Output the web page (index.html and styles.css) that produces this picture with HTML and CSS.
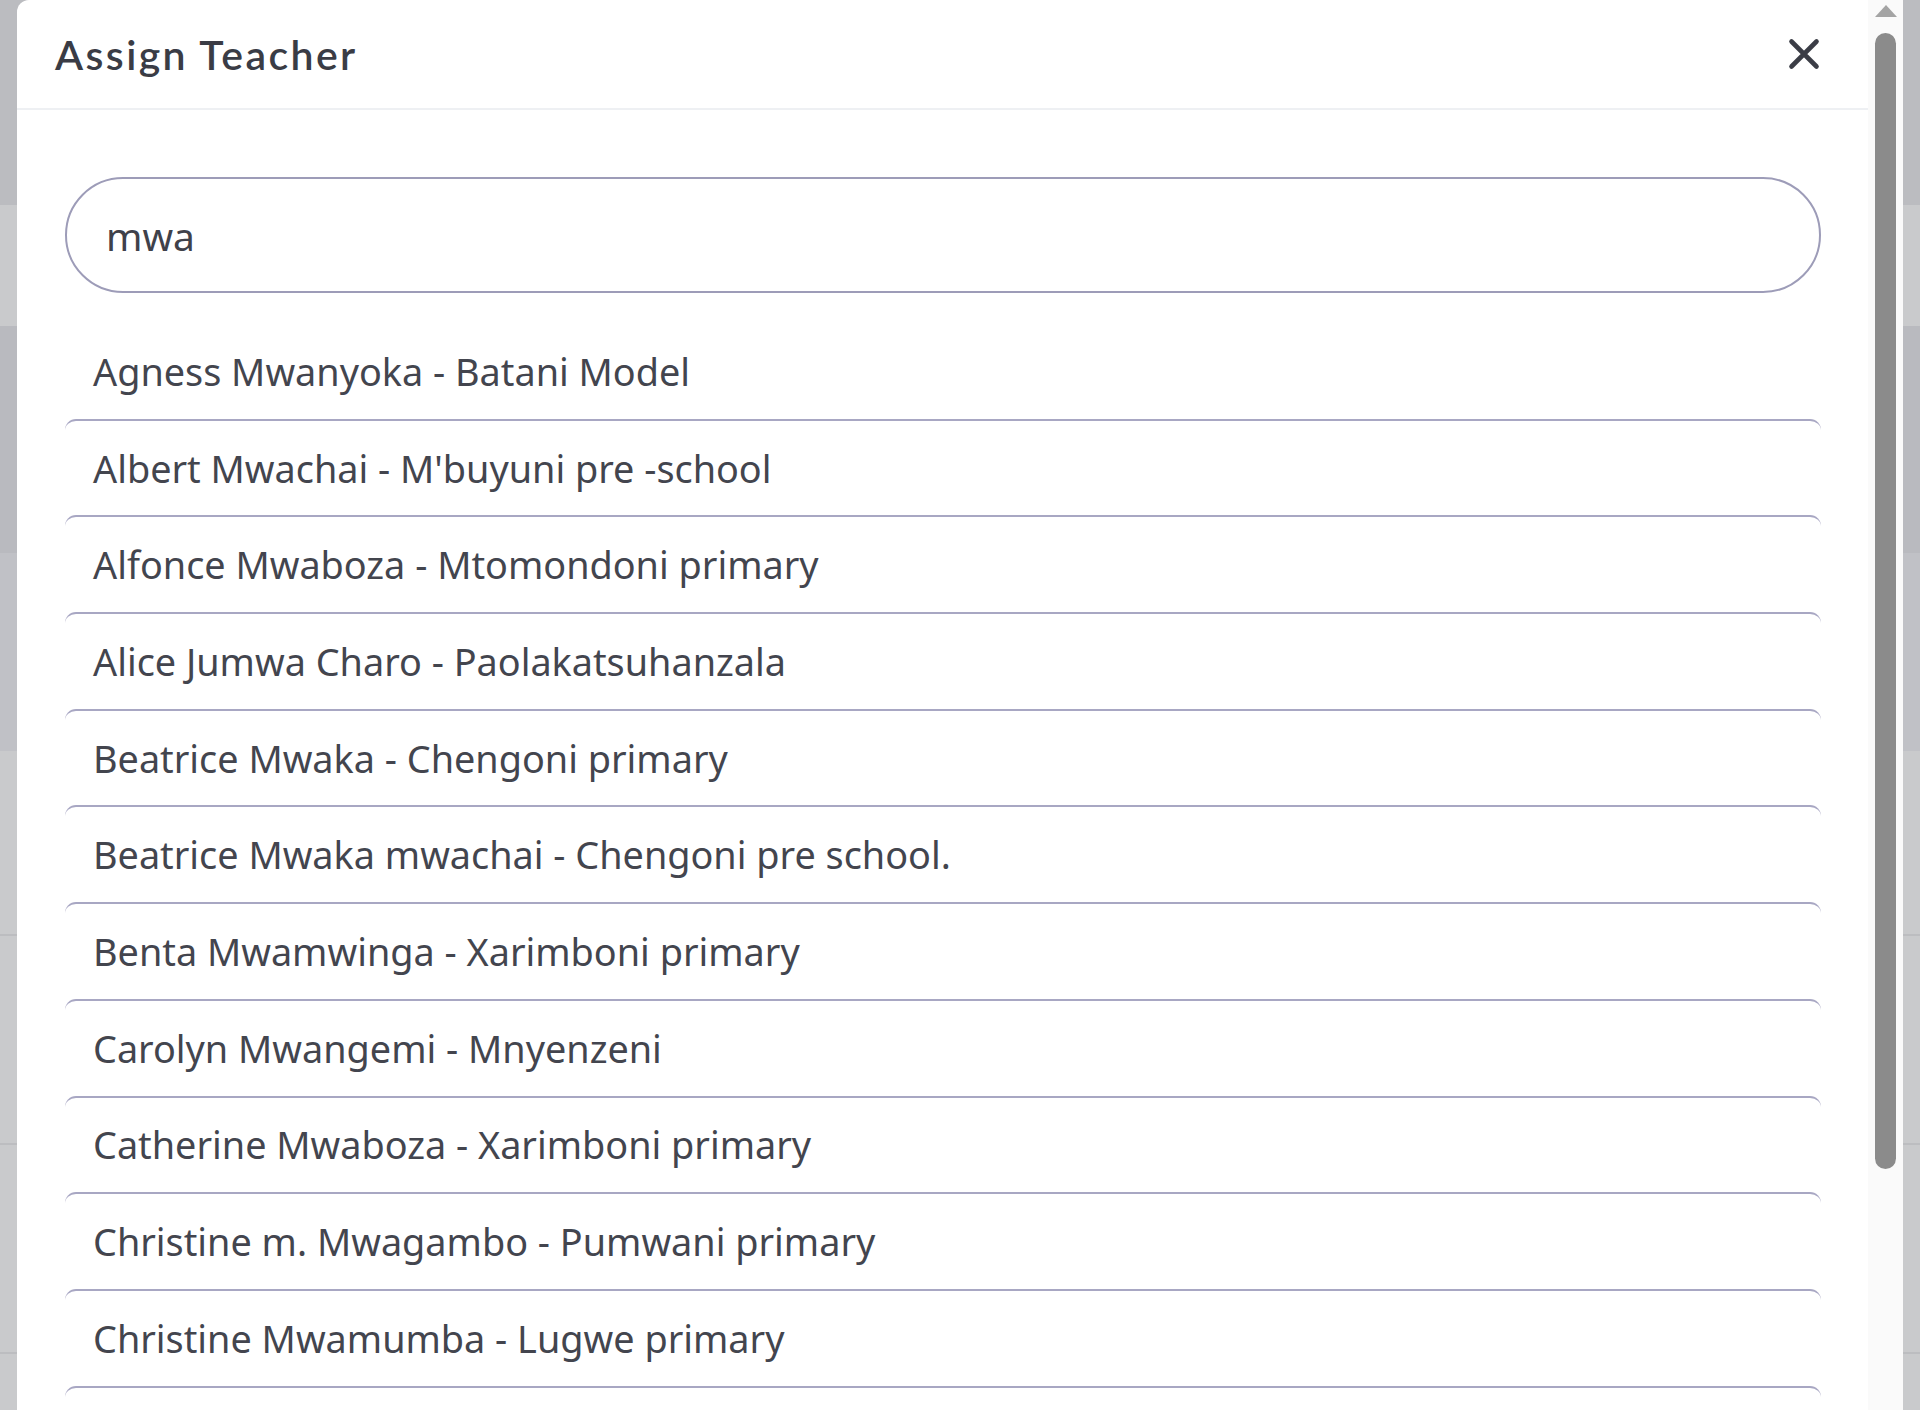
FILE: index.html
```html
<!DOCTYPE html>
<html lang="en">
<head>
<meta charset="utf-8">
<title>Assign Teacher</title>
<link rel="stylesheet" href="styles.css">
</head>
<body>
  <div class="modal">
    <div class="modal-scroll">
      <header class="modal-header">
        <h1 class="modal-title">Assign Teacher</h1>
        <button class="close-btn" aria-label="Close">
          <svg width="32" height="32" viewBox="0 0 32 32"><path d="M3.5 3.5 L28.5 28.5 M28.5 3.5 L3.5 28.5" stroke="#3b3d46" stroke-width="4.6" stroke-linecap="round" fill="none"/></svg>
        </button>
      </header>
      <div class="modal-body">
        <input class="search" type="text" value="mwa">
        <ul class="results">
          <li class="result">Agness Mwanyoka - Batani Model</li>
          <li class="result">Albert Mwachai - M'buyuni pre -school</li>
          <li class="result">Alfonce Mwaboza - Mtomondoni primary</li>
          <li class="result">Alice Jumwa Charo - Paolakatsuhanzala</li>
          <li class="result">Beatrice Mwaka - Chengoni primary</li>
          <li class="result">Beatrice Mwaka mwachai - Chengoni pre school.</li>
          <li class="result">Benta Mwamwinga - Xarimboni primary</li>
          <li class="result">Carolyn Mwangemi - Mnyenzeni</li>
          <li class="result">Catherine Mwaboza - Xarimboni primary</li>
          <li class="result">Christine m. Mwagambo - Pumwani primary</li>
          <li class="result">Christine Mwamumba - Lugwe primary</li>
          <li class="result result-empty"></li>
        </ul>
      </div>
    </div>
    <div class="scrollbar" aria-hidden="true">
      <span class="scroll-arrow"></span>
      <span class="scroll-thumb"></span>
    </div>
  </div>
</body>
</html>
```

FILE: styles.css
```css
html, body {
  margin: 0;
  padding: 0;
  height: 100%;
}

body {
  display: flex;
  padding: 0 17px;
  box-sizing: border-box;
  overflow: hidden;
  background: linear-gradient(to bottom,
    #bbbcc0 0, #bbbcc0 205px,
    #c9cacc 205px, #c9cacc 326px,
    #b9babf 326px, #b9babf 553px,
    #c0c1c6 553px, #c0c1c6 751px,
    #c9cacc 751px, #c9cacc 934px,
    #bcbdc0 934px, #bcbdc0 936px,
    #c9cacc 936px, #c9cacc 1143px,
    #bcbdc0 1143px, #bcbdc0 1145px,
    #c9cacc 1145px, #c9cacc 1352px,
    #bcbdc0 1352px, #bcbdc0 1354px,
    #c9cacc 1354px);
  font-family: "Noto Sans", "Open Sans", sans-serif;
}

.modal {
  flex: 1;
  height: 100%;
  display: flex;
  background: #fff;
  border-radius: 12px 0 0 0;
  overflow: hidden;
}

.modal-scroll {
  flex: 1;
  min-width: 0;
  overflow: hidden;
}

.scrollbar {
  width: 35px;
  flex: none;
  background: #fafafa;
  display: flex;
  flex-direction: column;
  align-items: center;
}

.scroll-arrow {
  width: 0;
  height: 0;
  margin-top: 5px;
  border-left: 11.5px solid transparent;
  border-right: 11.5px solid transparent;
  border-bottom: 12px solid #a4a4a4;
}

.scroll-thumb {
  width: 21px;
  height: 1136px;
  margin-top: 16px;
  background: #8b8b8b;
  border-radius: 11px;
}

.modal-header {
  height: 110px;
  box-sizing: border-box;
  display: flex;
  align-items: center;
  justify-content: space-between;
  padding: 0 48px 0 38px;
  border-bottom: 2px solid #eef0f3;
}

.modal-title {
  margin: 0;
  font-family: Lato, "Noto Sans", sans-serif;
  font-weight: 600;
  font-size: 41px;
  color: #3a3c45;
  letter-spacing: 2.4px;
}

.close-btn {
  border: 0;
  background: none;
  padding: 0;
  width: 32px;
  height: 32px;
  display: flex;
  cursor: pointer;
}

.modal-body {
  padding: 67px 47px 40px 48px;
}

.search {
  display: block;
  width: 100%;
  height: 116px;
  box-sizing: border-box;
  border: 2px solid #9d9cb8;
  border-radius: 58px;
  padding: 0 39px;
  font-family: "Noto Sans", sans-serif;
  font-size: 39px;
  color: #3f414a;
  background: #fff;
  outline: none;
}

.results {
  list-style: none;
  margin: 29px 0 0;
  padding: 0;
}

.result {
  height: 96.7px;
  box-sizing: border-box;
  display: flex;
  align-items: center;
  padding: 0 28px;
  border-top: 2px solid #a8a7c3;
  border-radius: 11px 11px 0 0;
  font-size: 37.8px;
  color: #43454e;
}

.result:first-child {
  border-top-color: transparent;
}
```
